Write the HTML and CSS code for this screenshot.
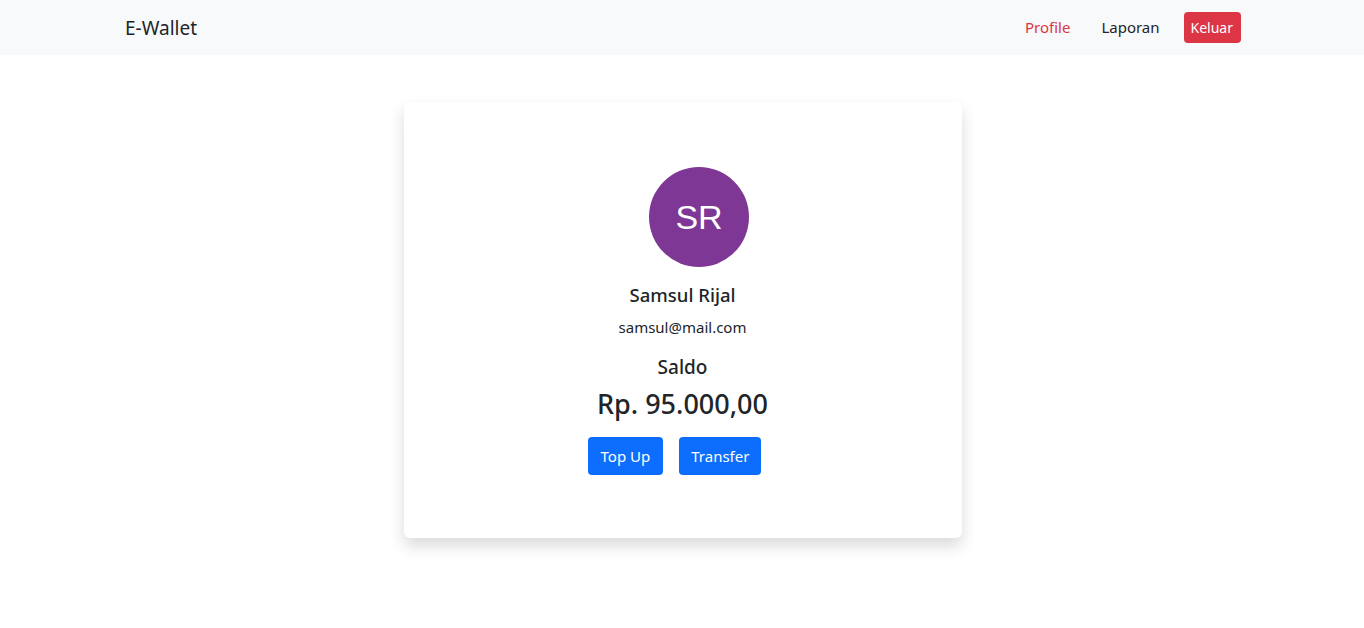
FILE: index.html
```html
<!DOCTYPE html>
<html lang="id">
<head>
<meta charset="utf-8">
<title>E-Wallet</title>
<link rel="stylesheet" href="styles.css">
</head>
<body>
<nav class="navbar">
  <div class="container nav-inner">
    <a class="brand" href="#">E-Wallet</a>
    <div class="nav-links">
      <a class="nav-link active" href="#">Profile</a>
      <a class="nav-link" href="#">Laporan</a>
      <a class="btn btn-danger btn-sm" href="#">Keluar</a>
    </div>
  </div>
</nav>
<main class="container main">
  <div class="card">
    <div class="avatar-wrap"><div class="avatar">SR</div></div>
    <h5 class="name">Samsul Rijal</h5>
    <p class="email">samsul@mail.com</p>
    <h5 class="saldo-label">Saldo</h5>
    <h3 class="saldo">Rp. 95.000,00</h3>
    <div class="actions">
      <a class="btn btn-primary" href="#">Top Up</a>
      <a class="btn btn-primary btn-narrow" href="#">Transfer</a>
    </div>
  </div>
</main>
</body>
</html>
```
FILE: styles.css
```css
* { box-sizing: border-box; }
html, body { min-height: 100%; }
body {
  margin: 0;
  font-family: "Noto Sans", "Open Sans", sans-serif;
  font-size: 16px;
  line-height: 1.5;
  color: #212529;
  background: #fff;
}
a { text-decoration: none; }
.container {
  width: 1140px;
  margin: 0 auto;
  padding: 0 12px;
}
.navbar {
  background: #f8f9fa;
  padding: 8px 0;
  height: 55px;
}
.nav-inner {
  display: flex;
  align-items: center;
  justify-content: space-between;
  height: 39px;
}
.brand {
  font-size: 19px;
  line-height: 30px;
  color: #212529;
  margin-left: 1px;
}
.nav-links {
  display: flex;
  align-items: center;
}
.nav-link {
  padding: 8px 8px;
  font-size: 15px;
  color: #212529;
}
.nav-link.active { color: #dc3545; margin-right: 15px; }
.btn {
  display: inline-block;
  color: #fff;
  text-align: center;
}
.btn-sm {
  padding: 4px 8px 4px 7px;
  font-size: 14px;
  line-height: 23px;
  border-radius: 4px;
  margin-left: 16px;
  margin-right: -1px;
}
.btn-danger { background: #dc3545; }
.btn-primary {
  background: #0d6efd;
  padding: 0 13px;
  height: 38px;
  line-height: 38px;
  font-size: 15px;
  border-radius: 4px;
  margin-right: 16px;
}
.btn-narrow { padding: 0 12px; }
.main {
  display: flex;
  justify-content: center;
  padding-top: 47px;
  padding-bottom: 60px;
  padding-left: 13px;
}
.card {
  width: 558px;
  border-radius: 6px;
  background: #fff;
  box-shadow: 0 8px 16px rgba(0,0,0,0.15);
  padding: 65px 16px 63px;
  display: flex;
  flex-direction: column;
  align-items: center;
  text-align: center;
}
.avatar-wrap {
  display: flex;
  justify-content: center;
  padding-left: 33px;
}
.avatar {
  width: 100px;
  height: 100px;
  border-radius: 50%;
  background: #7e3794;
  color: #fff;
  font-family: "Liberation Sans", Arial, sans-serif;
  font-size: 34px;
  display: flex;
  align-items: center;
  justify-content: center;
}
h5, h3, p { margin: 0; }
.name {
  margin-top: 16px;
  font-size: 18.5px;
  font-weight: 500;
  line-height: 24px;
  margin-bottom: 8px;
}
.email {
  font-size: 15px;
  line-height: 24px;
  margin-bottom: 16px;
}
.saldo-label {
  font-size: 19px;
  font-weight: 500;
  line-height: 24px;
  margin-bottom: 8px;
}
.saldo {
  font-size: 27px;
  font-weight: 500;
  line-height: 34px;
  margin-bottom: 16px;
}
.actions {
  display: flex;
}
```
